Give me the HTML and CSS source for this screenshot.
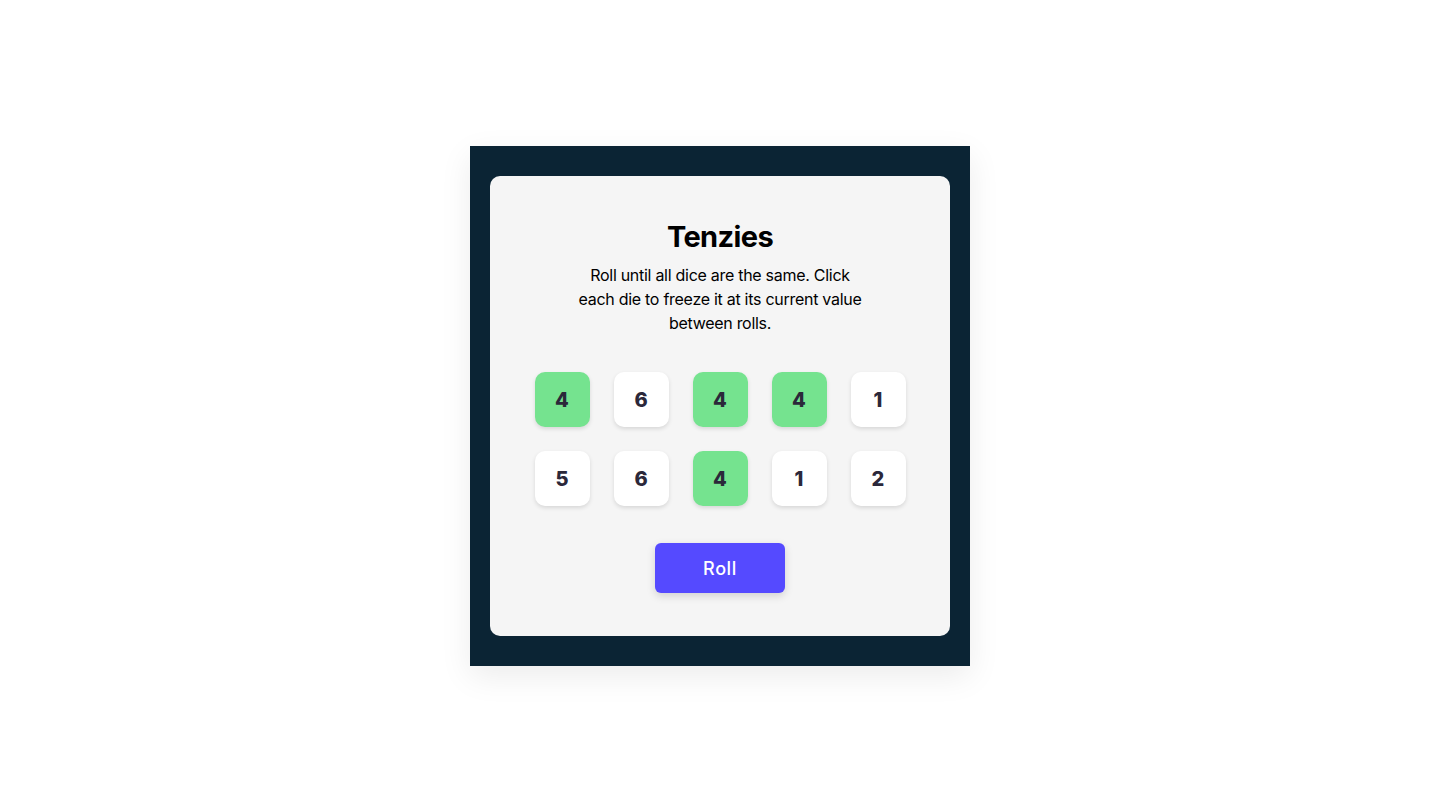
FILE: index.html
```html
<!DOCTYPE html>
<html lang="en">
<head>
<meta charset="UTF-8">
<title>Tenzies</title>
<link rel="stylesheet" href="styles.css">
</head>
<body>
<div class="frame">
  <main class="card">
    <h1 class="title">Tenzies</h1>
    <p class="instructions">Roll until all dice are the same. Click each die to freeze it at its current value between rolls.</p>
    <div class="dice">
      <button class="die held">4</button>
      <button class="die">6</button>
      <button class="die held">4</button>
      <button class="die held">4</button>
      <button class="die">1</button>
      <button class="die">5</button>
      <button class="die">6</button>
      <button class="die held">4</button>
      <button class="die">1</button>
      <button class="die">2</button>
    </div>
    <button class="roll">Roll</button>
  </main>
</div>
</body>
</html>
```
FILE: styles.css
```css
* { box-sizing: border-box; }
html, body {
  margin: 0;
  height: 100%;
}
body {
  background: #ffffff;
  font-family: Inter, "Noto Sans", sans-serif;
  display: flex;
  align-items: center;
  justify-content: center;
}
.frame {
  width: 500px;
  height: 520px;
  background: #0B2434;
  padding: 30px 20px;
  box-shadow: 0 10px 30px rgba(0, 0, 0, 0.08);
}
.card {
  height: 460px;
  background: #F5F5F5;
  border-radius: 10px;
  display: flex;
  flex-direction: column;
  align-items: center;
  padding-top: 42px;
}
.title {
  margin: 0;
  font-size: 29px;
  line-height: 38px;
  font-weight: 700;
  color: #000;
  letter-spacing: -0.6px;
}
.instructions {
  margin: 7px 0 0;
  max-width: 288px;
  text-align: center;
  font-size: 16px;
  line-height: 24px;
  letter-spacing: -0.28px;
  color: #000;
}
.dice {
  margin-top: 37px;
  display: grid;
  grid-template-columns: repeat(5, 55px);
  grid-auto-rows: 55px;
  gap: 24px;
}
.die {
  border: none;
  border-radius: 10px;
  background: #ffffff;
  box-shadow: 0 2px 4px rgba(0, 0, 0, 0.12);
  font-family: Inter, "Noto Sans", sans-serif;
  font-size: 20px;
  font-weight: 800;
  color: #2B283A;
  padding: 0;
  cursor: pointer;
}
.die.held {
  background: #75E38F;
}
.roll {
  margin-top: 37px;
  width: 130px;
  height: 50px;
  border: none;
  border-radius: 6px;
  background: #554AFF;
  color: #ffffff;
  font-family: Inter, "Noto Sans", sans-serif;
  font-size: 18px;
  font-weight: 500;
  letter-spacing: 0.6px;
  box-shadow: 0 3px 8px rgba(0, 0, 0, 0.15);
  cursor: pointer;
}
```
